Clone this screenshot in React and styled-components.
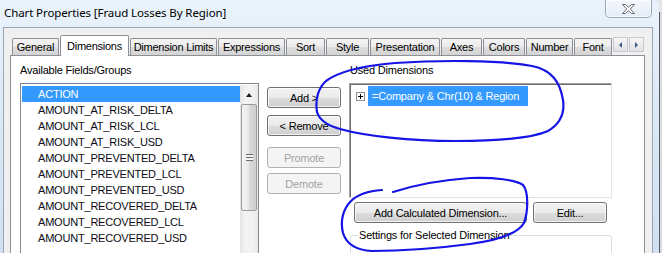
import styled, { createGlobalStyle } from "styled-components";

const GlobalStyle = createGlobalStyle`
  html, body { margin: 0; padding: 0; }
  body {
    width: 662px;
    height: 253px;
    overflow: hidden;
    background: #e2e4e6;
    font-family: "Liberation Sans", Arial, sans-serif;
  }
`;

const fields = [
  "ACTION",
  "AMOUNT_AT_RISK_DELTA",
  "AMOUNT_AT_RISK_LCL",
  "AMOUNT_AT_RISK_USD",
  "AMOUNT_PREVENTED_DELTA",
  "AMOUNT_PREVENTED_LCL",
  "AMOUNT_PREVENTED_USD",
  "AMOUNT_RECOVERED_DELTA",
  "AMOUNT_RECOVERED_LCL",
  "AMOUNT_RECOVERED_USD",
];

const tabs = [
  { label: "General", w: 47 },
  { label: "Dimensions", w: 69, active: true },
  { label: "Dimension Limits", w: 87 },
  { label: "Expressions", w: 67 },
  { label: "Sort", w: 39 },
  { label: "Style", w: 43 },
  { label: "Presentation", w: 70 },
  { label: "Axes", w: 41 },
  { label: "Colors", w: 42 },
  { label: "Number", w: 47 },
  { label: "Font", w: 38 },
];

const App = () => {
  return (
    <Page>
      <GlobalStyle />
      <Window>
        <TitleBar>
          <Title>Chart Properties [Fraud Losses By Region]</Title>
          <CloseButton>
            <svg width="13" height="10" viewBox="0 0 13 10">
              <polygon
                points="0.5,0.5 3.5,0.5 6.5,3.2 9.5,0.5 12.5,0.5 8.3,5 12.5,9.5 9.5,9.5 6.5,6.8 3.5,9.5 0.5,9.5 4.7,5"
                fill="#fbfbfb"
                stroke="#6a6f76"
                strokeWidth="1"
              />
            </svg>
          </CloseButton>
        </TitleBar>
        <Client>
          <TabStrip>
            {tabs.map((t) => (
              <Tab key={t.label} $w={t.w} $active={t.active}>
                {t.label}
              </Tab>
            ))}
            <TabScroller>
              <ScrollArrow $dir="left" />
              <ScrollArrow $dir="right" />
            </TabScroller>
          </TabStrip>
          <Panel>
            <LeftCol>
              <Label>Available Fields/Groups</Label>
              <ListBox>
                <Items>
                  {fields.map((f, i) => (
                    <Item key={f} $selected={i === 0}>
                      {f}
                    </Item>
                  ))}
                </Items>
                <VScroll>
                  <UpButton>
                    <UpGlyph />
                  </UpButton>
                  <Thumb>
                    <Grip />
                  </Thumb>
                </VScroll>
              </ListBox>
            </LeftCol>
            <MidCol>
              <Button $w={74}>Add &gt;</Button>
              <Button $w={74} $mt={7}>&lt; Remove</Button>
              <Button $w={74} $mt={11} disabled>Promote</Button>
              <Button $w={74} $mt={5} disabled>Demote</Button>
            </MidCol>
            <RightCol>
              <Label $indent={1}>Used Dimensions</Label>
              <UsedBox>
                <UsedRow>
                  <Expander>
                    <svg width="9" height="9" viewBox="0 0 9 9">
                      <rect x="0.5" y="0.5" width="8" height="8" fill="#fff" stroke="#8f8f8f" />
                      <path d="M2 4.5h5M4.5 2v5" stroke="#000" strokeWidth="1" />
                    </svg>
                  </Expander>
                  <UsedItem>=Company &amp; Chr(10) &amp; Region</UsedItem>
                </UsedRow>
              </UsedBox>
              <ButtonRow>
                <Button $w={173}>Add Calculated Dimension...</Button>
                <Button $w={74}>Edit...</Button>
              </ButtonRow>
              <Group>
                <Legend>Settings for Selected Dimension</Legend>
              </Group>
            </RightCol>
          </Panel>
        </Client>
      </Window>
      <BehindEdge />
      <Scribble viewBox="0 0 662 253" width="662" height="253">
        <path
          d="M317 112 C315 100, 318 88, 326 81 C338 72, 360 66, 395 63 C440 60, 500 60, 532 66 C552 70, 560 82, 563 100 C565 114, 560 124, 548 131 C530 139, 495 141, 455 141 C410 141, 365 136, 340 129 C326 125, 319 119, 317 112"
          fill="none"
          stroke="#1414e6"
          strokeWidth="2.2"
          strokeLinecap="round"
        />
        <path
          d="M393 192 C415 185, 440 180, 470 178 C495 177, 515 180, 523 185 C529 192, 528 212, 524 223 C518 233, 500 240, 470 244 C440 248, 400 251, 372 251 C355 250, 346 243, 343 233 C340 221, 343 209, 351 201 C358 194, 368 191, 382 190"
          fill="none"
          stroke="#1414e6"
          strokeWidth="2.2"
          strokeLinecap="round"
        />
      </Scribble>
    </Page>
  );
};

const Page = styled.div`
  position: relative;
  display: flex;
  width: 662px;
  height: 253px;
  overflow: hidden;
`;

const Window = styled.div`
  width: 659px;
  box-sizing: border-box;
  height: 253px;
  display: flex;
  flex-direction: column;
  padding: 0 6px 0 3px;
  border-top-right-radius: 6px;
  background: linear-gradient(180deg, #eaf3fb 0%, #dde9f5 40%, #cfe1f2 100%);
`;

const BehindEdge = styled.div`
  width: 2px;
  margin-top: 12px;
  border-left: 1px solid #585c66;
  background: #d9dbde;
`;

const TitleBar = styled.div`
  height: 27px;
  display: flex;
  justify-content: space-between;
  align-items: flex-start;
  flex-shrink: 0;
`;

const Title = styled.div`
  margin: 5px 0 0 1px;
  font-family: "Noto Sans", "Open Sans", sans-serif;
  font-size: 11.5px;
  line-height: 16px;
  color: #000;
  letter-spacing: -0.1px;
`;

const CloseButton = styled.div`
  width: 47px;
  height: 18px;
  box-sizing: border-box;
  margin-right: 1px;
  display: flex;
  align-items: center;
  justify-content: center;
  border: 1px solid #9aa9ba;
  border-top: none;
  border-radius: 0 0 5px 5px;
  background: linear-gradient(180deg, #f4f8fc, #e3ecf5);
  box-shadow: inset 0 0 0 1px rgba(255, 255, 255, 0.7);
`;

const Client = styled.div`
  flex: 1;
  display: flex;
  flex-direction: column;
  border: 1px solid #99a6b6;
  border-bottom: none;
  background: #f0f0f0;
  padding: 7px 7px 0 6px;
  min-height: 0;
`;

const TabStrip = styled.div`
  display: flex;
  align-items: flex-end;
  gap: 1px;
  height: 20px;
  margin-left: 2px;
  flex-shrink: 0;
`;

const Tab = styled.div`
  position: relative;
  box-sizing: border-box;
  width: ${(p) => p.$w}px;
  height: ${(p) => (p.$active ? 21 : 17)}px;
  margin-bottom: ${(p) => (p.$active ? -1 : 0)}px;
  z-index: ${(p) => (p.$active ? 1 : 0)};
  display: flex;
  align-items: center;
  justify-content: center;
  border: 1px solid #8e9097;
  border-bottom: none;
  border-radius: 2px 2px 0 0;
  background: ${(p) =>
    p.$active ? "#ffffff" : "linear-gradient(180deg, #f4f4f4 0%, #ebebeb 50%, #dddddd 51%, #d4d4d4 100%)"};
  font-size: 11px;
  letter-spacing: -0.25px;
  color: #000;
  white-space: nowrap;
  padding-bottom: ${(p) => (p.$active ? 1 : 0)}px;
`;

const TabScroller = styled.div`
  align-self: flex-start;
  margin-top: 2px;
  display: flex;
  gap: 1px;
`;

const ScrollArrow = styled.div`
  width: 15px;
  height: 15px;
  box-sizing: border-box;
  border: 1px solid #c6cad0;
  background: linear-gradient(180deg, #f6f6f6, #e2e2e2);
  display: flex;
  align-items: center;
  justify-content: center;
  &::after {
    content: "";
    width: 0;
    height: 0;
    border-top: 3px solid transparent;
    border-bottom: 3px solid transparent;
    ${(p) =>
      p.$dir === "left"
        ? "border-right: 3px solid #3d5a8c;"
        : "border-left: 3px solid #3d5a8c;"}
  }
`;

const Panel = styled.div`
  flex: 1;
  display: flex;
  align-items: flex-start;
  border: 1px solid #8e9097;
  border-bottom: none;
  background: #fff;
  padding-left: 9px;
`;

const LeftCol = styled.div`
  width: 239px;
  display: flex;
  flex-direction: column;
`;

const Label = styled.div`
  font-size: 11px;
  line-height: 13px;
  height: 13px;
  padding-top: 8px;
  padding-left: ${(p) => p.$indent || 0}px;
  margin-bottom: 6px;
  color: #000;
  letter-spacing: -0.2px;
`;

const ListBox = styled.div`
  height: 200px;
  display: flex;
  border: 1px solid #828790;
  background: #fff;
  padding: 1px 0 0 1px;
`;

const Items = styled.div`
  width: 218px;
  padding-top: 1px;
`;

const Item = styled.div`
  height: 16px;
  line-height: 16px;
  padding-left: 16px;
  font-size: 11px;
  letter-spacing: -0.2px;
  color: ${(p) => (p.$selected ? "#fff" : "#0a0a14")};
  background: ${(p) => (p.$selected ? "#3399ff" : "transparent")};
  white-space: nowrap;
`;

const VScroll = styled.div`
  width: 18px;
  display: flex;
  flex-direction: column;
  background: linear-gradient(90deg, #e4e4e4, #f3f3f3 30%, #f1f1f1 70%, #e9e9e9);
`;

const UpButton = styled.div`
  height: 17px;
  display: flex;
  align-items: center;
  justify-content: center;
`;

const UpGlyph = styled.div`
  width: 0;
  height: 0;
  margin-top: 3px;
  border-left: 3.5px solid transparent;
  border-right: 3.5px solid transparent;
  border-bottom: 4px solid #1d1d1d;
`;

const Thumb = styled.div`
  margin: 2px 1px 0;
  height: 107px;
  box-sizing: border-box;
  border: 1px solid #9a9a9a;
  border-radius: 2px;
  background: linear-gradient(90deg, #f4f4f4, #e9e9e9 45%, #d8d8d8 55%, #cfcfcf);
  display: flex;
  align-items: center;
  justify-content: center;
`;

const Grip = styled.div`
  width: 7px;
  height: 7px;
  background: repeating-linear-gradient(180deg, #6b6b6b 0 1px, #f4f4f4 1px 3px);
`;

const MidCol = styled.div`
  display: flex;
  flex-direction: column;
  margin-left: 8px;
  padding-top: 31px;
`;

const Button = styled.button`
  box-sizing: border-box;
  width: ${(p) => p.$w}px;
  height: 21px;
  margin: ${(p) => p.$mt || 0}px 0 0;
  padding: 0;
  border: 1px solid ${(p) => (p.disabled ? "#adb2b5" : "#707070")};
  border-radius: 3px;
  background: ${(p) =>
    p.disabled
      ? "#f4f4f4"
      : "linear-gradient(180deg, #f2f2f2 0%, #ebebeb 50%, #dddddd 51%, #cfcfcf 100%)"};
  box-shadow: ${(p) => (p.disabled ? "none" : "inset 0 0 0 1px rgba(255,255,255,0.75)")};
  font-family: "Liberation Sans", Arial, sans-serif;
  font-size: 11px;
  letter-spacing: -0.2px;
  color: ${(p) => (p.disabled ? "#a3a3a3" : "#000")};
`;

const RightCol = styled.div`
  width: 263px;
  margin-left: 8px;
  display: flex;
  flex-direction: column;
`;

const UsedBox = styled.div`
  height: 115px;
  box-sizing: border-box;
  border: 1px solid;
  border-color: #a0a0a0 #e3e3e3 #e3e3e3 #a0a0a0;
  box-shadow: inset 1px 1px 0 #6f6f6f;
  background: #fff;
  padding: 1px 0 0 1px;
`;

const UsedRow = styled.div`
  height: 20px;
  display: flex;
  align-items: center;
  margin-top: 1px;
  padding-left: 5px;
`;

const Expander = styled.div`
  width: 9px;
  height: 9px;
  display: flex;
  margin-right: 3px;
  margin-top: 1px;
`;

const UsedItem = styled.div`
  width: 160px;
  height: 20px;
  line-height: 20px;
  box-sizing: border-box;
  padding-left: 4px;
  background: #3399ff;
  color: #fff;
  font-size: 11px;
  letter-spacing: -0.2px;
  white-space: nowrap;
`;

const ButtonRow = styled.div`
  display: flex;
  gap: 6px;
  margin-top: 4px;
  padding-left: 5px;
`;

const Group = styled.fieldset`
  margin: 6px 0 0 1px;
  width: 262px;
  box-sizing: border-box;
  height: 40px;
  padding: 0 8px;
  border: 1px solid #d5dfe5;
  border-radius: 3px;
`;

const Legend = styled.legend`
  padding: 0;
  font-size: 11px;
  line-height: 13px;
  letter-spacing: -0.2px;
  color: #000;
`;

const Scribble = styled.svg`
  position: absolute;
  left: 0;
  top: 0;
  pointer-events: none;
`;

export default App;
